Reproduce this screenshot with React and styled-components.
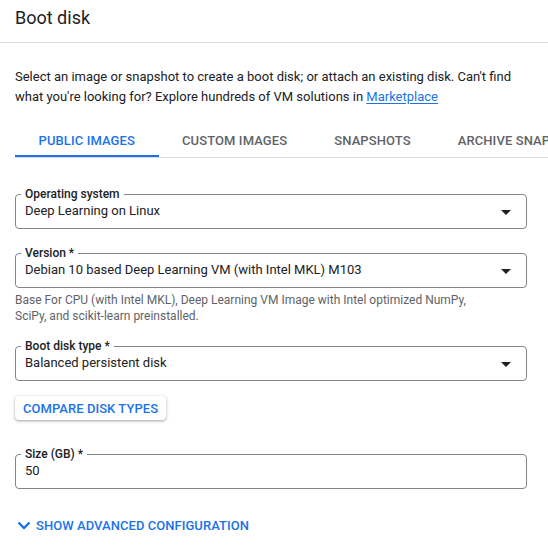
import React from "react";
import styled, { createGlobalStyle } from "styled-components";

const Global = createGlobalStyle`
  html, body { margin: 0; padding: 0; background: #fff; }
  body { font-family: Roboto, "Noto Sans", Arial, sans-serif; color: #202124; -webkit-font-smoothing: antialiased; }
  * { box-sizing: border-box; }
`;

const Page = styled.div`
  width: 548px;
  height: 547px;
  overflow: hidden;
  background: #fff;
`;

const Header = styled.header`
  height: 43px;
  padding: 4px 15px 0;
  border-bottom: 1px solid #dadce0;
`;

const Title = styled.h1`
  margin: 0;
  font-size: 18px;
  line-height: 28px;
  font-weight: 400;
  color: #202124;
`;

const Body = styled.div`
  padding: 24px 21px 0 15px;
  display: flex;
  flex-direction: column;
`;

const Intro = styled.p`
  margin: 0;
  font-size: 13px;
  line-height: 20px;
  color: #202124;
`;

const Link = styled.a`
  color: #1a73e8;
  text-decoration: underline;
  text-underline-offset: 2px;
`;

const Tabs = styled.div`
  display: flex;
  margin: 15px -21px 0 0;
  border-bottom: 1px solid #dadce0;
  overflow: hidden;
  white-space: nowrap;
`;

const Tab = styled.div`
  flex: none;
  height: 36px;
  padding: 3px 23.5px 0;
  display: flex;
  align-items: center;
  font-size: 13px;
  font-weight: 500;
  letter-spacing: 0.1px;
  text-transform: uppercase;
  color: ${(p) => (p.$active ? "#1a73e8" : "#5f6368")};
  border-bottom: 3px solid ${(p) => (p.$active ? "#1a73e8" : "transparent")};
  margin-bottom: -1px;
`;

const Field = styled.fieldset`
  margin: ${(p) => p.$mt}px 0 0;
  padding: 0 10px 7px 9px;
  border: 1px solid #80868b;
  border-radius: 4px;
  min-width: 0;
`;

const Legend = styled.legend`
  margin-left: -4px;
  padding: 0 4px;
  font-size: 12px;
  line-height: 14px;
  font-weight: 500;
  color: #202124;
`;

const FieldRow = styled.div`
  display: flex;
  align-items: center;
  justify-content: space-between;
  height: 20px;
`;

const Value = styled.span`
  font-size: 13px;
  line-height: 20px;
  color: #202124;
`;

const Arrow = styled.span`
  width: 0;
  height: 0;
  margin-right: 5px;
  margin-top: 2px;
  border-left: 5px solid transparent;
  border-right: 5px solid transparent;
  border-top: 5px solid #202124;
`;

const Helper = styled.div`
  margin: 4px 0 0 0;
  font-size: 12px;
  line-height: 16px;
  color: #5f6368;
`;

const RaisedButton = styled.button`
  align-self: flex-start;
  margin-top: 15px;
  height: 24px;
  padding: 0 8px;
  border: none;
  border-radius: 4px;
  background: #fff;
  box-shadow: 0 1px 2px rgba(60, 64, 67, 0.3), 0 1px 3px 1px rgba(60, 64, 67, 0.15);
  font-family: inherit;
  font-size: 13px;
  font-weight: 500;
  color: #1a73e8;
  letter-spacing: 0.05px;
`;

const Toggle = styled.div`
  margin-top: 26px;
  display: flex;
  align-items: center;
  gap: 5px;
  padding-left: 2px;
  height: 20px;
  font-size: 13px;
  font-weight: 500;
  color: #1a73e8;
  letter-spacing: 0.05px;
`;

function SelectField({ label, value, mt }) {
  return (
    <Field $mt={mt}>
      <Legend>{label}</Legend>
      <FieldRow>
        <Value>{value}</Value>
        <Arrow />
      </FieldRow>
    </Field>
  );
}

export default function App() {
  return (
    <Page>
      <Global />
      <Header>
        <Title>Boot disk</Title>
      </Header>
      <Body>
        <Intro>
          Select an image or snapshot to create a boot disk; or attach an existing disk. Can't find
          what you're looking for? Explore hundreds of VM solutions in <Link>Marketplace</Link>
        </Intro>
        <Tabs>
          <Tab $active>Public images</Tab>
          <Tab>Custom images</Tab>
          <Tab>Snapshots</Tab>
          <Tab>Archive snapshots</Tab>
        </Tabs>
        <SelectField mt={29} label="Operating system" value="Deep Learning on Linux" />
        <SelectField mt={17} label="Version *" value="Debian 10 based Deep Learning VM (with Intel MKL) M103" />
        <Helper>
          Base For CPU (with Intel MKL), Deep Learning VM Image with Intel optimized NumPy,
          <br />
          SciPy, and scikit-learn preinstalled.
        </Helper>
        <SelectField mt={15} label="Boot disk type *" value="Balanced persistent disk" />
        <RaisedButton>COMPARE DISK TYPES</RaisedButton>
        <Field $mt={27}>
          <Legend>Size (GB) *</Legend>
          <FieldRow>
            <Value>50</Value>
          </FieldRow>
        </Field>
        <Toggle>
          <svg width="14" height="9" viewBox="0 0 14 9">
            <path d="M1.5 1.5 L7 7 L12.5 1.5" fill="none" stroke="#1a73e8" strokeWidth="2.4" />
          </svg>
          SHOW ADVANCED CONFIGURATION
        </Toggle>
      </Body>
    </Page>
  );
}
